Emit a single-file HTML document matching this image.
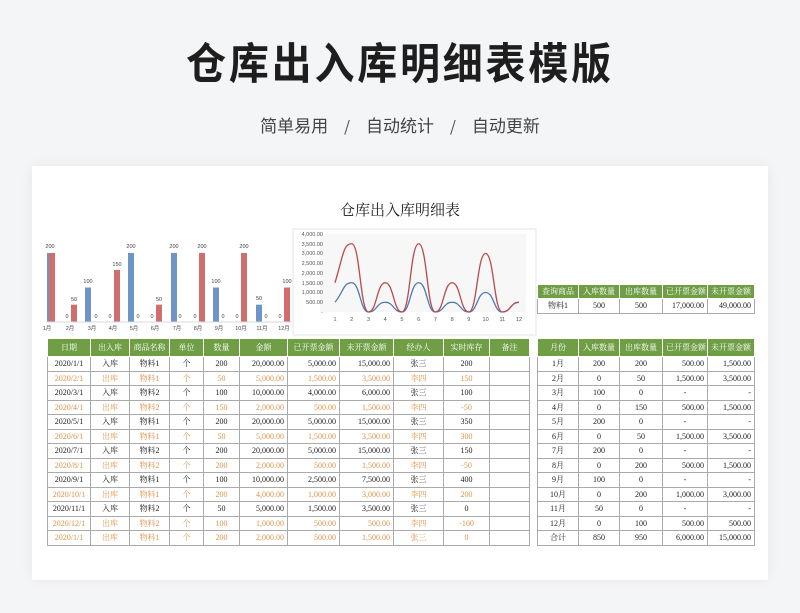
<!DOCTYPE html>
<html><head><meta charset="utf-8">
<style>
*{margin:0;padding:0;box-sizing:border-box}
body{width:800px;height:613px;background:#f4f5f7;position:relative;overflow:hidden;font-family:"Liberation Sans","Noto Sans CJK SC",sans-serif}
.title{position:absolute;left:0;top:33px;width:800px;text-align:center;font-size:43px;font-weight:bold;color:#1e1e1e;font-family:"Noto Sans CJK SC",sans-serif;letter-spacing:3px;line-height:56px;transform:scaleX(0.93)}
.sub{position:absolute;left:0;top:112px;width:800px;text-align:center;font-size:17px;color:#444;font-family:"Noto Sans CJK SC",sans-serif;line-height:26px}
.sub span{margin:0 16px;font-size:15px}
.card{position:absolute;left:32px;top:166px;width:736px;height:414px;background:#fff;box-shadow:0 0 12px rgba(0,0,0,0.06)}
.ct{position:absolute;left:0;top:199px;width:800px;text-align:center;font-size:15px;color:#222;font-family:"Noto Serif CJK SC",serif}
table{position:absolute;border-collapse:collapse;font-family:"Liberation Serif","Noto Serif CJK SC",serif;font-size:8px;table-layout:fixed}
td,th{border:1px solid #aaa;height:14.5px;padding:0 3px;text-align:center;white-space:nowrap;overflow:hidden;color:#222;font-weight:normal}
th{background:#6f9e45;color:#fff;border-color:#fff;height:18px;font-family:"Noto Serif CJK SC",serif}
tr.o td{color:#e0934a}
.r{text-align:right}
</style></head><body>
<div class="title">仓库出入库明细表模版</div>
<div class="sub">简单易用<span>/</span>自动统计<span>/</span>自动更新</div>
<div class="card"></div>
<div class="ct">仓库出入库明细表</div>

<svg style="position:absolute;left:0;top:0" width="800" height="613">
<rect x="293" y="229" width="243" height="106" fill="#fff" stroke="#e6e6e6"/>
<rect x="320" y="234" width="206" height="78" fill="#f7f7f7"/>
<g fill="#6f95c7">
<rect x="47" y="253" width="2" height="69"/>
<rect x="85" y="287.5" width="6" height="34.5"/>
<rect x="128" y="253" width="6" height="69"/>
<rect x="171" y="253" width="6" height="69"/>
<rect x="213" y="287.5" width="6" height="34.5"/>
<rect x="256" y="304.7" width="6" height="17.3"/>
</g>
<g fill="#cf6e6c">
<rect x="49" y="253" width="6" height="69"/>
<rect x="71" y="304.7" width="6" height="17.3"/>
<rect x="114" y="270" width="6" height="52"/>
<rect x="156" y="304.7" width="6" height="17.3"/>
<rect x="199" y="253" width="6" height="69"/>
<rect x="241" y="253" width="6" height="69"/>
<rect x="284" y="287.5" width="6" height="34.5"/>
</g>
<line x1="47" y1="322" x2="292" y2="322" stroke="#d8d8d8"/>
<g font-size="5.5" fill="#444" font-family="Liberation Sans" text-anchor="middle">
<text x="50" y="248">200</text>
<text x="67" y="318">0</text><text x="74" y="301">50</text>
<text x="88" y="283">100</text><text x="96" y="318">0</text>
<text x="110" y="318">0</text><text x="117" y="266">150</text>
<text x="131" y="248">200</text><text x="138" y="318">0</text>
<text x="152" y="318">0</text><text x="159" y="301">50</text>
<text x="174" y="248">200</text><text x="180" y="318">0</text>
<text x="195" y="318">0</text><text x="202" y="248">200</text>
<text x="216" y="283">100</text><text x="223" y="318">0</text>
<text x="237" y="318">0</text><text x="244" y="248">200</text>
<text x="259" y="300">50</text><text x="266" y="318">0</text>
<text x="280" y="318">0</text><text x="287" y="283">100</text>
<text x="47" y="330">1月</text><text x="70" y="330">2月</text><text x="92" y="330">3月</text><text x="113" y="330">4月</text><text x="134" y="330">5月</text><text x="155" y="330">6月</text><text x="177" y="330">7月</text><text x="198" y="330">8月</text><text x="219" y="330">9月</text><text x="241" y="330">10月</text><text x="262" y="330">11月</text><text x="284" y="330">12月</text>
</g>
<g font-size="5.5" fill="#555" font-family="Liberation Sans" text-anchor="end">
<text x="323" y="236">4,000.00</text><text x="323" y="246">3,500.00</text><text x="323" y="255">3,000.00</text><text x="323" y="265">2,500.00</text><text x="323" y="275">2,000.00</text><text x="323" y="285">1,500.00</text><text x="323" y="294">1,000.00</text><text x="323" y="304">500.00</text><text x="323" y="314">-</text>
</g>
<g font-size="5.5" fill="#555" font-family="Liberation Sans" text-anchor="middle">
<text x="335" y="321">1</text><text x="351.7" y="321">2</text><text x="368.5" y="321">3</text><text x="385.2" y="321">4</text><text x="401.9" y="321">5</text><text x="418.7" y="321">6</text><text x="435.4" y="321">7</text><text x="452.1" y="321">8</text><text x="468.8" y="321">9</text><text x="485.6" y="321">10</text><text x="502.3" y="321">11</text><text x="519" y="321">12</text>
</g>
<path fill="none" stroke="#4a7ab5" stroke-width="1.3" d="M335 302.25 C343.4 292 343.3 282.75 351.7 282.75 C360.1 282.75 360.1 312 368.5 312 C376.9 312 376.8 302.25 385.2 302.25 C393.6 302.25 393.5 312 401.9 312 C410.3 312 410.3 282.75 418.7 282.75 C427.1 282.75 427 312 435.4 312 C443.8 312 443.7 302.25 452.1 302.25 C460.5 302.25 460.4 312 468.8 312 C477.2 312 477.2 292.5 485.6 292.5 C494 292.5 493.9 312 502.3 312 C510.7 312 510.6 302.25 519 302.25"/>
<path fill="none" stroke="#b94a4a" stroke-width="1.3" d="M335 282.75 C343.4 255 343.3 243.75 351.7 243.75 C360.1 243.75 360.1 312 368.5 312 C376.9 312 376.8 282.75 385.2 282.75 C393.6 282.75 393.5 312 401.9 312 C410.3 312 410.3 243.75 418.7 243.75 C427.1 243.75 427 312 435.4 312 C443.8 312 443.7 282.75 452.1 282.75 C460.5 282.75 460.4 312 468.8 312 C477.2 312 477.2 253.5 485.6 253.5 C494 253.5 493.9 312 502.3 312 C510.7 312 510.6 302.25 519 302.25"/>
</svg>

<table style="left:47px;top:338px;width:482px">
<colgroup><col style="width:43px"><col style="width:39px"><col style="width:40px"><col style="width:34px"><col style="width:36px"><col style="width:48px"><col style="width:52px"><col style="width:54px"><col style="width:50px"><col style="width:46px"><col style="width:40px"></colgroup>
<tr><th>日期</th><th>出入库</th><th>商品名称</th><th>单位</th><th>数量</th><th>金额</th><th>已开票金额</th><th>未开票金额</th><th>经办人</th><th>实时库存</th><th>备注</th></tr>
<tr><td>2020/1/1</td><td>入库</td><td>物料1</td><td>个</td><td>200</td><td class="r">20,000.00</td><td class="r">5,000.00</td><td class="r">15,000.00</td><td>张三</td><td>200</td><td></td></tr>
<tr class="o"><td>2020/2/1</td><td>出库</td><td>物料1</td><td>个</td><td>50</td><td class="r">5,000.00</td><td class="r">1,500.00</td><td class="r">3,500.00</td><td>李四</td><td>150</td><td></td></tr>
<tr><td>2020/3/1</td><td>入库</td><td>物料2</td><td>个</td><td>100</td><td class="r">10,000.00</td><td class="r">4,000.00</td><td class="r">6,000.00</td><td>张三</td><td>100</td><td></td></tr>
<tr class="o"><td>2020/4/1</td><td>出库</td><td>物料2</td><td>个</td><td>150</td><td class="r">2,000.00</td><td class="r">500.00</td><td class="r">1,500.00</td><td>李四</td><td>-50</td><td></td></tr>
<tr><td>2020/5/1</td><td>入库</td><td>物料1</td><td>个</td><td>200</td><td class="r">20,000.00</td><td class="r">5,000.00</td><td class="r">15,000.00</td><td>张三</td><td>350</td><td></td></tr>
<tr class="o"><td>2020/6/1</td><td>出库</td><td>物料1</td><td>个</td><td>50</td><td class="r">5,000.00</td><td class="r">1,500.00</td><td class="r">3,500.00</td><td>李四</td><td>300</td><td></td></tr>
<tr><td>2020/7/1</td><td>入库</td><td>物料2</td><td>个</td><td>200</td><td class="r">20,000.00</td><td class="r">5,000.00</td><td class="r">15,000.00</td><td>张三</td><td>150</td><td></td></tr>
<tr class="o"><td>2020/8/1</td><td>出库</td><td>物料2</td><td>个</td><td>200</td><td class="r">2,000.00</td><td class="r">500.00</td><td class="r">1,500.00</td><td>李四</td><td>-50</td><td></td></tr>
<tr><td>2020/9/1</td><td>入库</td><td>物料1</td><td>个</td><td>100</td><td class="r">10,000.00</td><td class="r">2,500.00</td><td class="r">7,500.00</td><td>张三</td><td>400</td><td></td></tr>
<tr class="o"><td>2020/10/1</td><td>出库</td><td>物料1</td><td>个</td><td>200</td><td class="r">4,000.00</td><td class="r">1,000.00</td><td class="r">3,000.00</td><td>李四</td><td>200</td><td></td></tr>
<tr><td>2020/11/1</td><td>入库</td><td>物料2</td><td>个</td><td>50</td><td class="r">5,000.00</td><td class="r">1,500.00</td><td class="r">3,500.00</td><td>张三</td><td>0</td><td></td></tr>
<tr class="o"><td>2020/12/1</td><td>出库</td><td>物料2</td><td>个</td><td>100</td><td class="r">1,000.00</td><td class="r">500.00</td><td class="r">500.00</td><td>李四</td><td>-100</td><td></td></tr>
<tr class="o"><td>2020/1/1</td><td>出库</td><td>物料1</td><td>个</td><td>200</td><td class="r">2,000.00</td><td class="r">500.00</td><td class="r">1,500.00</td><td>张三</td><td>0</td><td></td></tr>
</table>

<table style="left:537px;top:284px;width:217px">
<colgroup><col style="width:41px"><col style="width:41px"><col style="width:43px"><col style="width:45px"><col style="width:47px"></colgroup>
<tr><th style="height:14px">查询商品</th><th style="height:14px">入库数量</th><th style="height:14px">出库数量</th><th style="height:14px">已开票金额</th><th style="height:14px">未开票金额</th></tr>
<tr><td style="height:13px">物料1</td><td>500</td><td>500</td><td class="r">17,000.00</td><td class="r">49,000.00</td></tr>
</table>

<table style="left:537px;top:338px;width:217px">
<colgroup><col style="width:41px"><col style="width:41px"><col style="width:43px"><col style="width:45px"><col style="width:47px"></colgroup>
<tr><th>月份</th><th>入库数量</th><th>出库数量</th><th>已开票金额</th><th>未开票金额</th></tr>
<tr><td>1月</td><td>200</td><td>200</td><td class="r">500.00</td><td class="r">1,500.00</td></tr>
<tr><td>2月</td><td>0</td><td>50</td><td class="r">1,500.00</td><td class="r">3,500.00</td></tr>
<tr><td>3月</td><td>100</td><td>0</td><td>-</td><td class="r">-</td></tr>
<tr><td>4月</td><td>0</td><td>150</td><td class="r">500.00</td><td class="r">1,500.00</td></tr>
<tr><td>5月</td><td>200</td><td>0</td><td>-</td><td class="r">-</td></tr>
<tr><td>6月</td><td>0</td><td>50</td><td class="r">1,500.00</td><td class="r">3,500.00</td></tr>
<tr><td>7月</td><td>200</td><td>0</td><td>-</td><td class="r">-</td></tr>
<tr><td>8月</td><td>0</td><td>200</td><td class="r">500.00</td><td class="r">1,500.00</td></tr>
<tr><td>9月</td><td>100</td><td>0</td><td>-</td><td class="r">-</td></tr>
<tr><td>10月</td><td>0</td><td>200</td><td class="r">1,000.00</td><td class="r">3,000.00</td></tr>
<tr><td>11月</td><td>50</td><td>0</td><td>-</td><td class="r">-</td></tr>
<tr><td>12月</td><td>0</td><td>100</td><td class="r">500.00</td><td class="r">500.00</td></tr>
<tr><td>合计</td><td>850</td><td>950</td><td class="r">6,000.00</td><td class="r">15,000.00</td></tr>
</table>
</body></html>
